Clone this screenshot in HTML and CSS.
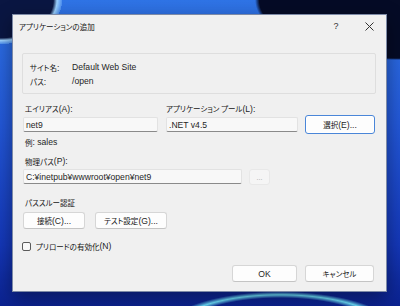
FILE: index.html
```html
<!DOCTYPE html>
<html lang="ja">
<head>
  <meta charset="UTF-8" />
  <title>アプリケーションの追加</title>
  <meta name="viewport" content="width=device-width, initial-scale=1" />
  <link rel="stylesheet" href="styles.css">
</head>
<body>

  <div class="dialog">
    <div class="titlebar">
      <span class="title ja">アプリケーションの追加</span>
      <span class="help">?</span>
      <span class="close">
        <svg width="9" height="9" viewBox="0 0 9 9"><path d="M0.5 0.5 L8.5 8.5 M8.5 0.5 L0.5 8.5" stroke="#333" stroke-width="1" fill="none"/></svg>
      </span>
    </div>

    <div class="content">
      <div class="info">
        <div class="info-row"><span class="info-label"><span class="ja">サイト名</span>:</span><span>Default Web Site</span></div>
        <div class="info-row"><span class="info-label"><span class="ja">パス</span>:</span><span>/open</span></div>
      </div>

      <div class="labels">
        <span class="alias-label"><span class="ja">エイリアス</span>(A):</span>
        <span><span class="ja">アプリケーション プール</span>(L):</span>
      </div>
      <div class="pair-row">
        <div class="input alias">net9</div>
        <div class="input pool">.NET v4.5</div>
        <button class="btn select"><span class="ja">選択</span>(E)...</button>
      </div>

      <div class="hint"><span class="ja">例</span>: sales</div>

      <div class="label path-label"><span class="ja">物理パス</span>(P):</div>
      <div class="path-row">
        <div class="input path">C:¥inetpub¥wwwroot¥open¥net9</div>
        <button class="btn browse" disabled>...</button>
      </div>

      <div class="label section ja">パススルー認証</div>
      <div class="btn-row">
        <button class="btn connect"><span class="ja">接続</span>(C)...</button>
        <button class="btn test"><span class="ja">テスト設定</span>(G)...</button>
      </div>

      <div class="check"><span class="box"></span><span class="ja">プリロードの有効化</span>(N)</div>

      <div class="footer">
        <button class="btn ok">OK</button>
        <button class="btn cancel"><span class="ja">キャンセル</span></button>
      </div>
    </div>
  </div>

</body>
</html>
```

FILE: styles.css
```css
* {
  margin: 0;
  padding: 0;
  box-sizing: border-box;
}
body {
  width: 400px;
  height: 306px;
  overflow: hidden;
  padding: 14px 0 0 12px;
  font-family: 'Liberation Sans', 'Noto Sans CJK JP', sans-serif;
  font-size: 8.6px;
  color: #1f1f1f;
  background:
    radial-gradient(ellipse 145px 60px at 400px 0, #050b26 0 97%, transparent 100%),
    radial-gradient(ellipse 62px 44px at 0 0, #0a1642 0 86%, #9cd2ff 92%, #4d8ff0 100%, transparent 100%),
    radial-gradient(ellipse 120px 40px at 280px 330px, transparent 0 80%, #6fe3ff 88%, transparent 96%),
    linear-gradient(180deg, #2f74e6 0%, #2358d8 40%, #1437b8 80%, #0b2290 100%);
}
.ja {
  font-family: 'Noto Sans CJK JP', sans-serif;
  font-size: 7.5px;
  font-feature-settings: "palt";
  color: #141414;
}
.dialog {
  width: 375px;
  height: 278px;
  background: #f0f0f0;
  border: 1px solid #7d8aa6;
  box-shadow: 0 6px 18px rgba(0, 0, 0, 0.4);
  display: flex;
  flex-direction: column;
}
.titlebar {
  height: 22px;
  display: flex;
  align-items: center;
  padding: 0 5px 0 6px;
}
.title {
  flex: 1;
}
.help {
  width: 20px;
  text-align: center;
  font-size: 9px;
  color: #333;
}
.close {
  width: 24px;
  margin-left: 11px;
  display: flex;
  justify-content: center;
}
.content {
  padding: 16px 10px 0 9px;
  display: flex;
  flex-direction: column;
}
.info {
  height: 41px;
  border: 1px solid #dedede;
  border-radius: 2px;
  padding: 6px 7px;
}
.info-row {
  display: flex;
  height: 14px;
  align-items: center;
}
.info-label {
  width: 42px;
}
.labels {
  display: flex;
  margin: 8px 0 0 3px;
  height: 12px;
  align-items: center;
}
.alias-label {
  width: 141px;
}
.pair-row {
  display: flex;
  align-items: center;
  margin: 1px 0 0 1px;
  height: 19px;
}
.input {
  height: 15px;
  background: #f8f8f8;
  border: 1px solid #e2e2e2;
  border-bottom-color: #8a8a8a;
  border-radius: 2px;
  padding: 0 2px;
  display: flex;
  align-items: center;
}
.input.alias {
  width: 135px;
}
.input.pool {
  width: 132px;
  margin-left: 8px;
}
.btn {
  font: inherit;
  color: #1f1f1f;
  background: #fdfdfd;
  border: 1px solid #d6d6d6;
  border-bottom-color: #c4c4c4;
  border-radius: 3px;
  display: flex;
  align-items: center;
  justify-content: center;
}
.btn.select {
  width: 70px;
  height: 19px;
  margin-left: 7px;
  border: 1px solid #4a86d8;
  box-shadow: inset 0 0 0 1px #ffffff;
}
.hint {
  margin: 2px 0 0 3px;
  height: 12px;
  display: flex;
  align-items: center;
}
.label {
  height: 12px;
  display: flex;
  align-items: center;
  margin-left: 3px;
}
.path-label {
  margin-top: 7px;
}
.path-row {
  display: flex;
  align-items: flex-start;
  margin: 2px 0 0 1px;
}
.input.path {
  width: 219px;
}
.btn.browse {
  width: 21px;
  height: 16px;
  margin-left: 7px;
  background: #f5f5f5;
  border-color: #e8e8e8;
  color: #a0a0a0;
  font-size: 7px;
}
.section {
  margin-top: 11px;
}
.btn-row {
  display: flex;
  gap: 10px;
  margin: 4px 0 0 1px;
}
.btn-row .btn {
  height: 17px;
}
.btn.connect {
  width: 62px;
}
.btn.test {
  width: 72px;
}
.check {
  display: flex;
  align-items: center;
  height: 12px;
  margin-top: 11px;
}
.box {
  width: 9px;
  height: 9px;
  border: 1px solid #5a5a5a;
  border-radius: 2px;
  background: #f8f8f8;
  margin-right: 5px;
}
.footer {
  display: flex;
  justify-content: flex-end;
  gap: 8px;
  margin: 13px 2px 0 0;
}
.footer .btn {
  height: 17px;
}
.btn.ok {
  width: 65px;
}
.btn.cancel {
  width: 69px;
}
```
